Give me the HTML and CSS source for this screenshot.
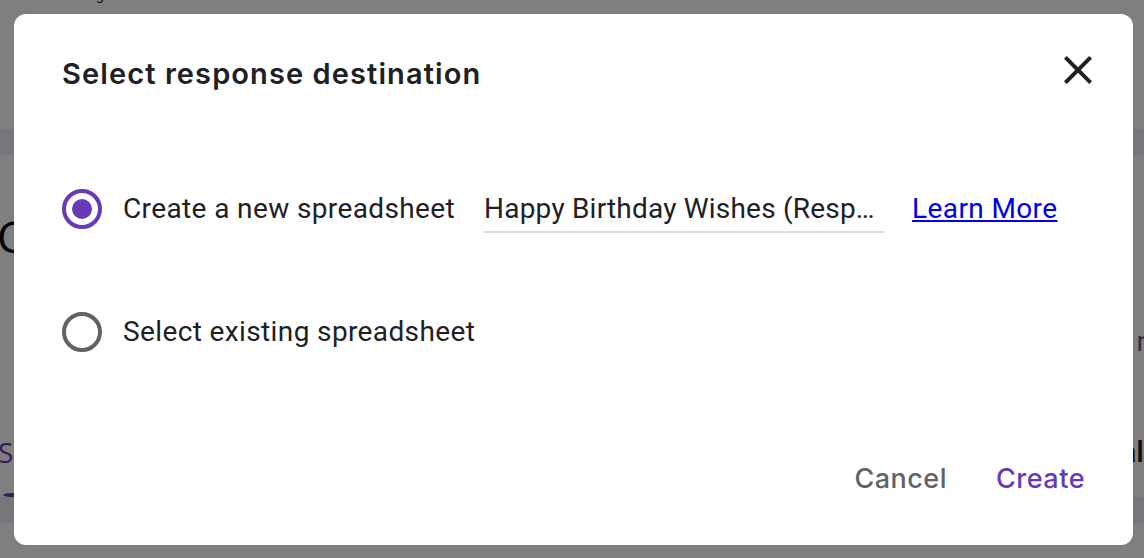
FILE: index.html
```html
<!DOCTYPE html>
<html>
<head>
<meta charset="utf-8">
<link rel="stylesheet" href="styles.css">
</head>
<body>
<div class="page">
  <div class="page-top"><span class="page-top-text">Settings</span></div>
  <div class="page-band"></div>
  <div class="page-main">
    <div class="page-left">
      <div class="big-heading">Collect</div>
      <div class="purple-link">Sheets</div>
      <div class="purple-dot"></div>
    </div>
    <div class="page-right">
      <div class="right-n">n</div>
      <div class="right-al">al</div>
    </div>
  </div>
  <div class="page-band2"></div>
</div>
<div class="overlay"></div>
<div class="dialog" role="dialog">
  <div class="dialog-header">
    <h1 class="dialog-title">Select response destination</h1>
    <button class="close-btn" aria-label="Close">
      <svg width="48" height="48" viewBox="0 0 24 24"><path d="M19 6.41L17.59 5 12 10.59 6.41 5 5 6.41 10.59 12 5 17.59 6.41 19 12 13.41 17.59 19 19 17.59 13.41 12z" fill="#202124"/></svg>
    </button>
  </div>
  <div class="options">
    <div class="option">
      <svg class="radio" width="40" height="40" viewBox="0 0 40 40"><circle cx="20" cy="20" r="18" fill="none" stroke="#673ab7" stroke-width="4"/><circle cx="20" cy="20" r="10" fill="#673ab7"/></svg>
      <span class="option-label">Create a new spreadsheet</span>
      <div class="name-field"><span class="name-text">Happy Birthday Wishes (Responses)</span></div>
      <a class="learn-more" href="#">Learn More</a>
    </div>
    <div class="option">
      <svg class="radio" width="40" height="40" viewBox="0 0 40 40"><circle cx="20" cy="20" r="18" fill="none" stroke="#5f6368" stroke-width="4"/></svg>
      <span class="option-label">Select existing spreadsheet</span>
    </div>
  </div>
  <div class="dialog-footer">
    <button class="text-btn cancel">Cancel</button>
    <button class="text-btn create">Create</button>
  </div>
</div>
</body>
</html>
```
FILE: styles.css
```css
html, body {
  margin: 0;
  padding: 0;
  background: #ffffff;
  overflow: hidden;
}
body {
  width: 1144px;
  height: 558px;
  font-family: Roboto, "Liberation Sans", sans-serif;
}
.page {
  display: flex;
  flex-direction: column;
  height: 558px;
}
.page-top {
  height: 129px;
  flex: none;
  display: flex;
  align-items: flex-start;
}
.page-top-text {
  font-size: 14px;
  line-height: 16px;
  color: #202124;
  margin-left: 60px;
  margin-top: -13px;
}
.page-band {
  height: 26px;
  flex: none;
  background: #eceef4;
}
.page-main {
  display: flex;
  justify-content: space-between;
  height: 342px;
  flex: none;
}
.page-left {
  display: flex;
  flex-direction: column;
}
.big-heading {
  margin-top: 56px;
  font-family: "Open Sans", sans-serif;
  font-size: 44px;
  line-height: 50px;
  color: #000;
  margin-left: -3px;
}
.purple-link {
  margin-top: 176px;
  font-family: "Open Sans", sans-serif;
  font-size: 28px;
  line-height: 30px;
  color: #673ab7;
  margin-left: -2px;
}
.purple-dot {
  margin-top: 26px;
  margin-left: 3px;
  width: 22px;
  height: 22px;
  border-radius: 50%;
  background: #673ab7;
}
.page-right {
  display: flex;
  flex-direction: column;
  align-items: flex-end;
}
.right-n {
  margin-top: 172px;
  font-size: 28px;
  line-height: 30px;
  color: #5f6368;
  margin-right: -8px;
}
.right-al {
  margin-top: 80px;
  font-size: 30px;
  font-weight: 500;
  line-height: 30px;
  color: #202124;
}
.page-band2 {
  height: 26px;
  flex: none;
  background: #eceef4;
}
.overlay {
  position: fixed;
  inset: 0;
  background: rgba(0, 0, 0, 0.5);
}
.dialog {
  position: fixed;
  left: 14px;
  top: 14px;
  width: 1119px;
  height: 531px;
  box-sizing: border-box;
  background: #ffffff;
  border-radius: 12px;
  display: flex;
  flex-direction: column;
  padding: 0 31px 0 48px;
}
.dialog-header {
  display: flex;
  align-items: center;
  justify-content: space-between;
  height: 118px;
}
.dialog-title {
  margin: 0;
  font-family: Inter, "Open Sans", sans-serif;
  font-weight: 600;
  font-size: 29px;
  color: #202124;
  letter-spacing: 1.1px;
}
.close-btn {
  border: 0;
  background: none;
  padding: 0;
  width: 48px;
  height: 48px;
  display: flex;
  margin-top: -6px;
}
.options {
  display: flex;
  flex-direction: column;
  margin-top: 15px;
}
.option {
  display: flex;
  align-items: center;
  height: 123px;
}
.radio {
  flex: none;
}
.option-label {
  margin-left: 21px;
  font-size: 28px;
  letter-spacing: 0.38px;
  color: #202124;
}
.name-field {
  margin-left: 29px;
  width: 400px;
  border-bottom: 2px solid #dadce0;
  padding-bottom: 6px;
  margin-top: 8px;
}
.name-text {
  display: block;
  width: 398px;
  white-space: nowrap;
  overflow: hidden;
  text-overflow: ellipsis;
  font-size: 28px;
  letter-spacing: 0.2px;
  color: #202124;
}
.learn-more {
  margin-left: 28px;
  font-size: 28px;
  letter-spacing: 0.38px;
  color: #0000ee;
  text-decoration: underline;
}
.dialog-footer {
  display: flex;
  justify-content: flex-end;
  gap: 49px;
  margin-top: 61px;
  padding-right: 17px;
}
.text-btn {
  border: 0;
  background: none;
  padding: 0;
  height: 48px;
  font-family: Inter, "Open Sans", sans-serif;
  font-weight: 500;
  font-size: 27px;
  letter-spacing: 0.5px;
}
.cancel { color: #5f6368; }
.create { color: #673ab7; }
```
